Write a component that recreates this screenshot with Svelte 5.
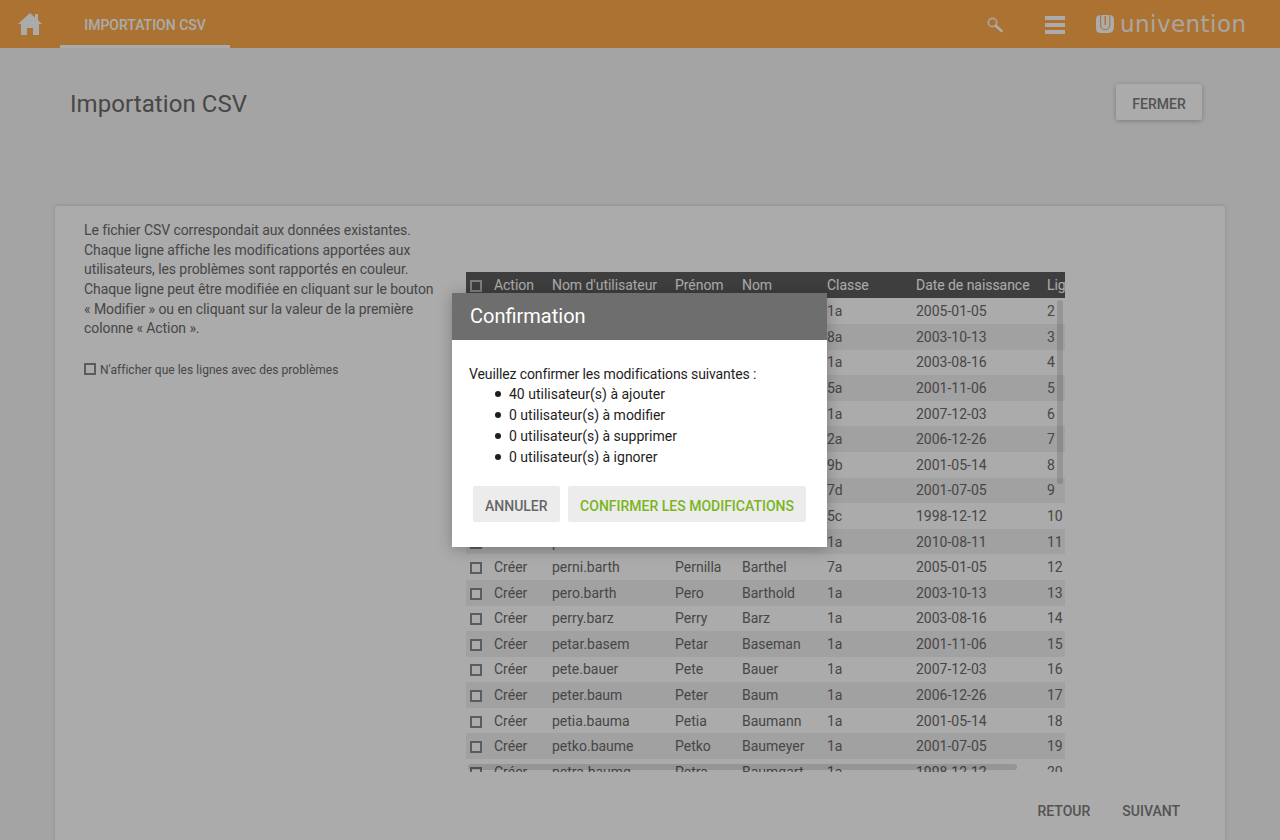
<script>
  const head = ["Action", "Nom d'utilisateur", "Prénom", "Nom", "Classe", "Date de naissance", "Ligne"];
  const rows = [
    ["Créer","paul.adam","Paul","Adam","1a","2005-01-05","2"],
    ["Créer","paula.adler","Paula","Adler","8a","2003-10-13","3"],
    ["Créer","pauli.ahrens","Pauli","Ahrens","1a","2003-08-16","4"],
    ["Créer","pavel.albers","Pavel","Albers","5a","2001-11-06","5"],
    ["Créer","pedro.albert","Pedro","Albert","1a","2007-12-03","6"],
    ["Créer","peer.arnold","Peer","Arnold","2a","2006-12-26","7"],
    ["Créer","peggy.bach","Peggy","Bach","9b","2001-05-14","8"],
    ["Créer","penny.bader","Penny","Bader","7d","2001-07-05","9"],
    ["Créer","percy.bahr","Percy","Bahr","5c","1998-12-12","10"],
    ["Créer","perla.bart","Perla","Bart","1a","2010-08-11","11"],
    ["Créer","perni.barth","Pernilla","Barthel","7a","2005-01-05","12"],
    ["Créer","pero.barth","Pero","Barthold","1a","2003-10-13","13"],
    ["Créer","perry.barz","Perry","Barz","1a","2003-08-16","14"],
    ["Créer","petar.basem","Petar","Baseman","1a","2001-11-06","15"],
    ["Créer","pete.bauer","Pete","Bauer","1a","2007-12-03","16"],
    ["Créer","peter.baum","Peter","Baum","1a","2006-12-26","17"],
    ["Créer","petia.bauma","Petia","Baumann","1a","2001-05-14","18"],
    ["Créer","petko.baume","Petko","Baumeyer","1a","2001-07-05","19"],
    ["Créer","petra.baumg","Petra","Baumgart","1a","1998-12-12","20"]
  ];
</script>

<div class="page">
  <header class="top">
    <svg class="home" viewBox="0 0 24 22" width="24" height="22" aria-hidden="true">
      <path d="M12 0 L17 4.5 V1 H20 V7.2 L24 11 H21 V22 H15 V15 H9 V22 H3 V11 H0 Z" fill="#fff"/>
    </svg>
    <div class="tab">IMPORTATION CSV</div>
    <div class="grow"></div>
    <svg class="search" viewBox="0 0 16 16" width="16" height="16" aria-hidden="true">
      <circle cx="5.5" cy="5.5" r="4.2" fill="none" stroke="#fff" stroke-width="1.8" opacity=".85"/>
      <path d="M9 9 L14.4 13.8" stroke="#fff" stroke-width="2.8" stroke-linecap="round"/>
    </svg>
    <div class="menu"><i></i><i></i><i></i></div>
    <div class="logo">
      <svg viewBox="0 0 18 18" width="18" height="18" aria-hidden="true">
        <path d="M4.5 0 H13.5 Q18 0 18 4.5 V12 Q18 18 12 18 H4.5 Q0 18 0 13.5 V4.5 Q0 0 4.5 0 Z" fill="#fff"/>
        <path d="M4.6 0 V10 Q4.6 14.6 9.2 14.6 Q13.8 14.6 13.8 10 V0" fill="none" stroke="#ffaa4b" stroke-width="1"/>
        <path d="M9.2 1 V10" stroke="#ffaa4b" stroke-width="1.4"/>
      </svg>
      <span>univention</span>
    </div>
  </header>

  <section class="titlebar">
    <h1>Importation CSV</h1>
    <button class="raised">FERMER</button>
  </section>

  <main class="card">
    <div class="cols">
      <div class="intro">
        <p>Le fichier CSV correspondait aux données existantes.<br>Chaque ligne affiche les modifications apportées aux utilisateurs, les problèmes sont rapportés en couleur.<br>Chaque ligne peut être modifiée en cliquant sur le bouton « Modifier » ou en cliquant sur la valeur de la première colonne « Action ».</p>
        <label class="filter"><span class="box small"></span>N'afficher que les lignes avec des problèmes</label>
      </div>
      <div class="grid">
        <table>
          <colgroup>
            <col class="c0"><col class="c1"><col class="c2"><col class="c3"><col class="c4"><col class="c5"><col class="c6"><col class="c7">
          </colgroup>
          <thead>
            <tr>
              <th><span class="box inv"></span></th>
              {#each head as h}<th>{h}</th>{/each}
            </tr>
          </thead>
          <tbody>
            {#each rows as r}
              <tr>
                <td><span class="box"></span></td>
                {#each r as c}<td>{c}</td>{/each}
              </tr>
            {/each}
          </tbody>
        </table>
        <div class="vbar"></div>
        <div class="hbar"></div>
      </div>
    </div>
    <div class="foot">
      <button class="flat">RETOUR</button>
      <button class="flat">SUIVANT</button>
    </div>
  </main>

  <div class="scrim"></div>

  <div class="dialog" role="dialog">
    <div class="dhead">Confirmation</div>
    <div class="dbody">
      <div class="msg">Veuillez confirmer les modifications suivantes :</div>
      <ul>
        <li>40 utilisateur(s) à ajouter</li>
        <li>0 utilisateur(s) à modifier</li>
        <li>0 utilisateur(s) à supprimer</li>
        <li>0 utilisateur(s) à ignorer</li>
      </ul>
      <div class="actions">
        <button class="dbtn">ANNULER</button>
        <button class="dbtn ok">CONFIRMER LES MODIFICATIONS</button>
      </div>
    </div>
  </div>
</div>

<style>
  :global(body) {
    margin: 0;
    background: #f5f5f5;
    font-family: Roboto, "Liberation Sans", sans-serif;
    overflow: hidden;
  }
  .page { height: 840px; overflow: hidden; display: flex; flex-direction: column; }

  .top {
    height: 48px;
    flex: none;
    background: #ffaa4b;
    display: flex;
    align-items: center;
    color: #fff;
  }
  .home { margin-left: 18px; flex: none; }
  .tab {
    margin-left: 18px;
    width: 170px;
    height: 48px;
    box-sizing: border-box;
    border-bottom: 3px solid #fff;
    display: flex;
    align-items: center;
    justify-content: center;
    font-size: 14px;
    font-weight: 500;
    padding-top: 5px;
  }
  .grow { flex: 1; }
  .search { flex: none; margin-right: 42px; margin-top: 1px; }
  .menu { width: 20px; display: flex; flex-direction: column; gap: 3px; margin-right: 31px; margin-top: 2px; }
  .menu i { display: block; height: 4px; background: #fff; }
  .logo { display: flex; align-items: center; gap: 6px; margin-right: 34px; width: 150px; }
  .logo span { font-family: "DejaVu Sans", sans-serif; font-weight: 400; font-size: 23px; letter-spacing: .45px; line-height: 1; margin-top: 0; opacity: .9; }
  .logo svg { flex: none; }

  .titlebar {
    height: 158px;
    flex: none;
    box-sizing: border-box;
    padding: 36px 78px 0 70px;
    display: flex;
    justify-content: space-between;
    align-items: flex-start;
  }
  h1 { margin: 6px 0 0; font-size: 24px; font-weight: 400; line-height: 28px; color: #6a6a6a; letter-spacing: .07px; }
  .raised {
    width: 86px;
    height: 36px;
    border: 0;
    border-radius: 2px;
    background: #fff;
    box-shadow: 0 1px 5px rgba(0,0,0,.25);
    font: 500 14px Roboto, sans-serif;
    color: #7c7c7c;
    padding: 4px 0 0;
  }

  .card {
    margin: 0 55px;
    flex: 1;
    background: #fff;
    border-radius: 3px 3px 0 0;
    box-shadow: 0 0 4px rgba(0,0,0,.15);
    box-sizing: border-box;
    padding: 15.3px 0 0 29px;
    display: flex;
    flex-direction: column;
    min-height: 0;
  }
  .cols { display: flex; align-items: flex-start; }
  .intro { width: 382px; flex: none; color: #6a6a6a; font-size: 14px; line-height: 19.6px; letter-spacing: -.08px; }
  .intro p { margin: 0; width: 352px; }
  .filter { display: flex; align-items: center; margin-top: 20.7px; font-size: 12px; line-height: 20px; letter-spacing: .03px; }
  .box {
    display: block;
    box-sizing: border-box;
    width: 12px;
    height: 12px;
    border: 2px solid #8a8a8a;
    background: #fff;
    margin-top: 2px;
  }
  .box.small { flex: none; margin: 0 4px 2px 0; }
  .box.inv { border-color: #bbb; background: transparent; }

  .grid {
    position: relative;
    width: 599px;
    height: 500px;
    margin-top: 50.7px;
    overflow: hidden;
    flex: none;
  }
  table { border-collapse: collapse; table-layout: fixed; width: 640px; font-size: 14px; color: #6a6a6a; }
  .c0 { width: 22px; } .c1 { width: 58px; } .c2 { width: 123px; } .c3 { width: 67px; }
  .c4 { width: 85px; } .c5 { width: 89px; } .c6 { width: 131px; } .c7 { width: 65px; }
  th, td { text-align: left; padding: 0 0 0 6px; white-space: nowrap; overflow: hidden; }
  th:first-child, td:first-child { padding: 0 0 0 4px; }
  thead tr { height: 26.4px; background: #5d5d5d; }
  th { font-weight: 400; color: #fff; letter-spacing: -.05px; }
  tbody tr { height: 25.6px; }
  tbody tr:nth-child(even) { background: #f0f0f0; }
  .vbar { position: absolute; left: 591px; top: 28px; width: 6px; height: 184px; border-radius: 3px; background: rgba(0,0,0,.13); }
  .hbar { position: absolute; left: 2px; top: 492px; width: 549px; height: 6px; border-radius: 3px; background: rgba(0,0,0,.13); }

  .foot { display: flex; justify-content: flex-end; gap: 0; margin-top: 21px; padding-right: 29px; }
  .flat {
    border: 0;
    background: none;
    font: 500 14px Roboto, sans-serif;
    color: #7c7c7c;
    height: 36px;
    padding: 0 16px;
  }

  .scrim { position: absolute; inset: 0; background: rgba(0,0,0,.33); }

  .dialog {
    position: absolute;
    left: 452px;
    top: 293px;
    width: 375px;
    height: 254px;
    background: #fff;
    box-shadow: 0 2px 14px rgba(0,0,0,.25);
    display: flex;
    flex-direction: column;
  }
  .dhead {
    height: 47px;
    flex: none;
    box-sizing: border-box;
    background: #6e6e6e;
    color: #fff;
    font-size: 20px;
    line-height: 46px;
    padding-left: 18px;
  }
  .dbody { padding: 24px 17px 0; color: #1e1e1e; font-size: 14px; line-height: 20.6px; }
  .msg { height: 20px; letter-spacing: -.12px; }
  ul { margin: 0; padding: 0 0 0 40px; list-style: none; }
  li { height: 20.9px; position: relative; }
  li::before {
    content: "";
    position: absolute;
    left: -14px;
    top: 7px;
    width: 6px;
    height: 6px;
    border-radius: 50%;
    background: #1e1e1e;
  }
  .actions { display: flex; gap: 8px; margin: 18.4px 0 0 4px; }
  .dbtn {
    height: 36px;
    border: 0;
    border-radius: 2px;
    background: #ececec;
    padding: 4px 12px 0;
    font: 500 14px Roboto, sans-serif;
    color: #666;
  }
  .dbtn.ok { color: #7ab51d; padding: 4px 12.5px 0; }
</style>
